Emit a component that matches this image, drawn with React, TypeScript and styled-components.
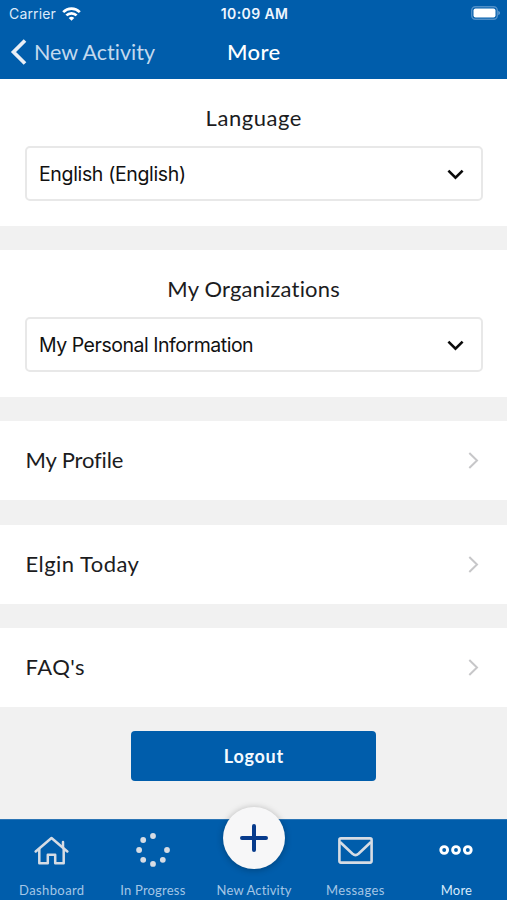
import React from 'react';
import styled, { createGlobalStyle } from 'styled-components';

const BLUE = '#005dab';

const GlobalStyle = createGlobalStyle`
  * { box-sizing: border-box; }
  body { margin: 0; background: #f1f1f1; }
`;

const Screen = styled.div`
  width: 507px;
  height: 900px;
  display: flex;
  flex-direction: column;
  overflow: hidden;
  background: #f1f1f1;
  color: #1c1c1e;
  font-family: Lato, 'Open Sans', sans-serif;
  font-variant-ligatures: none;
`;

const Header = styled.header`
  height: 79px;
  flex: none;
  background: ${BLUE};
  color: #fff;
`;

const StatusBar = styled.div`
  height: 27px;
  padding: 0 7px 0 9px;
  display: grid;
  grid-template-columns: 1fr auto 1fr;
  align-items: center;
  font-family: Inter, sans-serif;
  font-size: 14px;
`;

const Carrier = styled.div`
  display: flex;
  align-items: center;
  gap: 6px;
  color: #dceafa;
  letter-spacing: 0.15px;
`;

const Clock = styled.div`
  font-weight: 600;
  letter-spacing: 0.4px;
  color: #eef6ff;
`;

const Battery = styled.svg`
  justify-self: end;
  display: block;
  margin-top: -2px;
`;

const NavBar = styled.div`
  height: 50px;
  padding: 0 10px;
  display: grid;
  grid-template-columns: 1fr auto 1fr;
  align-items: center;
  font-size: 22px;
  line-height: 28px;
`;

const BackButton = styled.div`
  display: flex;
  align-items: center;
  gap: 7px;
  font-size: 21.5px;
  color: #c3d9ee;
`;

const Label = styled.span<{ $spacing?: number }>`
  display: block;
  white-space: nowrap;
  letter-spacing: ${({ $spacing = 0 }) => $spacing}px;
  margin-right: ${({ $spacing = 0 }) => -$spacing}px;
`;

const Title = styled(Label)`
  font-weight: 500;
`;

const Content = styled.main`
  flex: 1;
  display: flex;
  flex-direction: column;
  gap: 24.5px;
`;

const Section = styled.section`
  height: 146.5px;
  padding: 24px 25px 0;
  background: #fff;
  display: flex;
  flex-direction: column;
  align-items: stretch;
`;

const SectionTitle = styled.h2`
  margin: 0;
  height: 43px;
  display: flex;
  justify-content: center;
  font-size: 22px;
  font-weight: 400;
  line-height: 30px;
`;

const Select = styled.div`
  height: 55px;
  margin-right: -1px;
  padding: 1px 17px 0 12px;
  border: 2px solid #e8e8e8;
  border-radius: 5px;
  display: flex;
  align-items: center;
  justify-content: space-between;
  font-family: Inter, sans-serif;
  font-size: 19.5px;
  line-height: 24px;
  color: #111;
`;

const Row = styled.div`
  height: 79px;
  padding: 0 28px 0 25.5px;
  background: #fff;
  display: flex;
  align-items: center;
  justify-content: space-between;
  font-size: 22px;
  line-height: 28px;

  ${Label} {
    padding-bottom: 1px;
  }
`;

const LogoutButton = styled.button`
  width: 245px;
  height: 50px;
  margin: -1px auto 0;
  padding: 0;
  border: 0;
  border-radius: 4px;
  background: ${BLUE};
  color: #f4faff;
  display: flex;
  align-items: center;
  justify-content: center;
  font: 700 18px Lato, sans-serif;
`;

const TabBar = styled.nav`
  flex: none;
  height: 81px;
  padding-left: 1px;
  background: ${BLUE};
  border-top: 1px solid #2b75b5;
  display: grid;
  grid-template-columns: repeat(5, 1fr);
`;

const Tab = styled.div<{ $active?: boolean }>`
  display: flex;
  flex-direction: column;
  align-items: center;
  color: ${({ $active }) => ($active ? '#ffffff' : '#d6dce4')};
`;

const TabIcon = styled.div`
  height: 60px;
  display: flex;
  align-items: center;
  justify-content: center;
`;

const TabLabel = styled(Label)<{ $active?: boolean }>`
  font-size: 13px;
  line-height: 20px;
  color: ${({ $active }) => ($active ? '#d8ebfb' : '#a4c6e6')};
`;

const AddButton = styled.div`
  flex: none;
  width: 62px;
  height: 62px;
  margin-top: -24px;
  border-radius: 50%;
  background: #f7f7f8;
  box-shadow: 0 1px 7px rgba(0, 0, 0, 0.28);
  display: flex;
  align-items: center;
  justify-content: center;
`;

const WifiIcon = () => (
  <svg width="19" height="14" viewBox="0 0 19 14" fill="none" stroke="#fff" strokeWidth="2.7">
    <path d="M1.2 5.1a11.8 11.8 0 0 1 16.6 0" />
    <path d="M4.4 8.4a7.2 7.2 0 0 1 10.2 0" />
    <path d="M9.5 13.8L6.7 11a4 4 0 0 1 5.6 0z" fill="#fff" stroke="none" />
  </svg>
);

const DownIcon = () => (
  <svg width="17" height="11" viewBox="0 0 17 11" fill="none" stroke="#0a0a0a" strokeWidth="2.6">
    <path d="M1.4 1.6L8.5 8.6 15.6 1.6" />
  </svg>
);

const RightIcon = () => (
  <svg width="11" height="17" viewBox="0 0 11 17" fill="none" stroke="#c7c7c9" strokeWidth="2">
    <path d="M1.3 1L9 8.5 1.3 16" />
  </svg>
);

const HomeIcon = () => (
  <svg width="35" height="29" viewBox="0 0 35 29" fill="none" stroke="currentColor" strokeWidth="2.5" strokeLinejoin="round" strokeLinecap="round">
    <path d="M1.7 15.5L17.5 2 33.3 15.5" />
    <path d="M29 11.3V6" />
    <path d="M5.3 13.2V27.2H13.8V18.7H21.2V27.2H29.7V13.2" />
  </svg>
);

const dots = [[17, 3], [7.2, 7], [3.1, 17], [7.2, 26.8], [17, 30.9], [26.8, 26.8], [31, 17]];

const ProgressIcon = () => (
  <svg width="34" height="34" viewBox="0 0 34 34" fill="currentColor">
    {dots.map(([x, y]) => <circle key={`${x}-${y}`} cx={x} cy={y} r="2.9" />)}
  </svg>
);

const PlusIcon = () => (
  <svg width="28" height="28" viewBox="0 0 28 28" stroke="#073b8c" strokeWidth="4" strokeLinecap="round">
    <path d="M14 2V26M2 14H26" />
  </svg>
);

const MailIcon = () => (
  <svg width="35" height="27" viewBox="0 0 35 27" fill="none" stroke="currentColor" strokeWidth="2.6" strokeLinejoin="round">
    <rect x="1.4" y="1.4" width="32.2" height="24.2" rx="1.5" />
    <path d="M2 5L14.5 16.8Q17.5 19.4 20.5 16.8L33 5" />
  </svg>
);

const MoreIcon = () => (
  <svg width="34" height="12" viewBox="0 0 34 12" fill="none" stroke="currentColor" strokeWidth="2.9">
    <circle cx="5.2" cy="6" r="3.4" />
    <circle cx="17" cy="6" r="3.4" />
    <circle cx="28.8" cy="6" r="3.4" />
  </svg>
);

const sections = [
  { title: 'Language', titleSpacing: 0.55, value: 'English (English)', valueSpacing: -0.35 },
  { title: 'My Organizations', titleSpacing: 0.17, value: 'My Personal Information', valueSpacing: -0.47 },
];

const rows = [
  { text: 'My Profile', spacing: -0.15 },
  { text: 'Elgin Today', spacing: 0.45 },
  { text: "FAQ's", spacing: 0.5 },
];

export default function App() {
  return (
    <>
      <GlobalStyle />
      <Screen>
        <Header>
          <StatusBar>
            <Carrier>Carrier <WifiIcon /></Carrier>
            <Clock>10:09 AM</Clock>
            <Battery width="29" height="14" viewBox="0 0 29 14">
              <rect x="0.7" y="0.7" width="25.6" height="12.6" rx="3.7" fill="none" stroke="#4f8fc8" strokeWidth="1.4" />
              <rect x="2.5" y="2.5" width="22" height="9" rx="2" fill="#fff" />
              <path d="M27.3 4.8Q29 5.6 29 7T27.3 9.2Z" fill="#6ca2d2" />
            </Battery>
          </StatusBar>
          <NavBar>
            <BackButton>
              <svg width="17" height="26" viewBox="0 0 17 26" fill="none" stroke="#e9eef5" strokeWidth="3.7">
                <path d="M15 1.5L3.5 13 15 24.5" />
              </svg>
              <Label $spacing={0}>New Activity</Label>
            </BackButton>
            <Title $spacing={0.4}>More</Title>
          </NavBar>
        </Header>
        <Content>
          {sections.map((s) => (
            <Section key={s.title}>
              <SectionTitle><Label $spacing={s.titleSpacing}>{s.title}</Label></SectionTitle>
              <Select>
                <Label $spacing={s.valueSpacing}>{s.value}</Label>
                <DownIcon />
              </Select>
            </Section>
          ))}
          {rows.map((r) => (
            <Row key={r.text}>
              <Label $spacing={r.spacing}>{r.text}</Label>
              <RightIcon />
            </Row>
          ))}
          <LogoutButton><Label $spacing={0.75}>Logout</Label></LogoutButton>
        </Content>
        <TabBar>
          <Tab>
            <TabIcon><HomeIcon /></TabIcon>
            <TabLabel $spacing={0.4}>Dashboard</TabLabel>
          </Tab>
          <Tab>
            <TabIcon><ProgressIcon /></TabIcon>
            <TabLabel $spacing={0.2}>In Progress</TabLabel>
          </Tab>
          <Tab>
            <TabIcon><AddButton><PlusIcon /></AddButton></TabIcon>
            <TabLabel $spacing={0.15}>New Activity</TabLabel>
          </Tab>
          <Tab>
            <TabIcon><MailIcon /></TabIcon>
            <TabLabel $spacing={0.4}>Messages</TabLabel>
          </Tab>
          <Tab $active>
            <TabIcon><MoreIcon /></TabIcon>
            <TabLabel $active $spacing={0.2}>More</TabLabel>
          </Tab>
        </TabBar>
      </Screen>
    </>
  );
}
